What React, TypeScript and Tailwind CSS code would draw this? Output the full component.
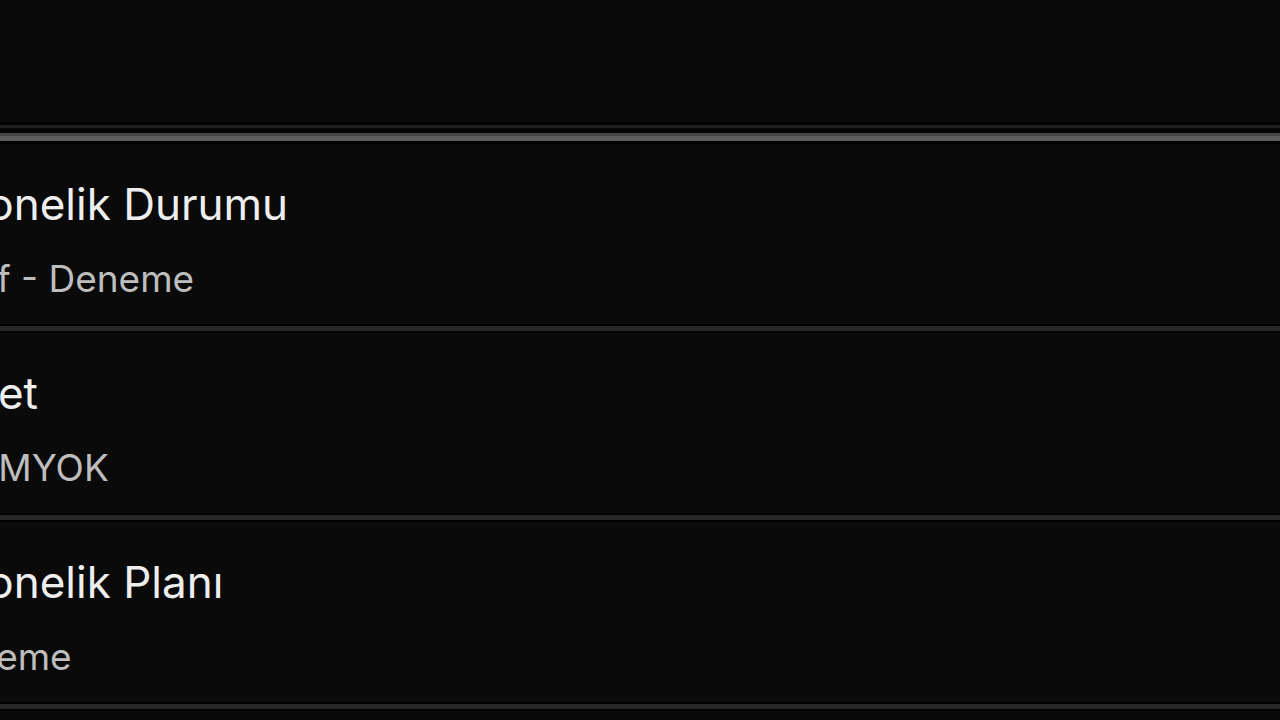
const rows = [
  { title: 'Abonelik Durumu', value: 'Aktif - Deneme', titleClass: '', valueClass: '' },
  { title: 'Paket', value: 'ÇOMYOK', titleClass: '-ml-[8px]', valueClass: 'ml-[13px]' },
  { title: 'Abonelik Planı', value: 'Deneme', titleClass: '', valueClass: '-ml-[4px]' }
]

const Separator = () => (
  <div>
    <div className="h-[2px] bg-black" />
    <div className="h-[5px] bg-[#272727]" />
    <div className="h-[2px] bg-black" />
  </div>
)

export default function App() {
  return (
    <div
      className="w-[1280px] h-[720px] overflow-hidden bg-[#0a0a0a]"
      style={{ fontFamily: 'Inter, "Liberation Sans", sans-serif' }}
    >
      {/* Header area */}
      <div className="h-[122px]" />
      <div className="h-[3px] bg-black" />
      <div className="h-[3px] bg-[#1f1f1f]" />
      <div className="h-[5px] bg-[#050505]" />
      <div className="h-[3px] bg-[#444444]" />
      <div className="h-[5px] bg-[#5c5c5c]" />
      <div className="h-[3px] bg-black" />

      {/* Info rows */}
      <div className="-ml-[70px]">
        {rows.map((row) => (
          <div key={row.title}>
            <div className="pt-[34px] pb-[23px] flex flex-col gap-[27px]">
              <p className={`text-[44px] leading-[52px] text-[#eeeeee] whitespace-nowrap ${row.titleClass}`}>
                {row.title}
              </p>
              <p className={`text-[37px] leading-[44px] text-[#bdbdbd] whitespace-nowrap ${row.valueClass}`}>
                {row.value}
              </p>
            </div>
            <Separator />
          </div>
        ))}
      </div>
    </div>
  )
}
